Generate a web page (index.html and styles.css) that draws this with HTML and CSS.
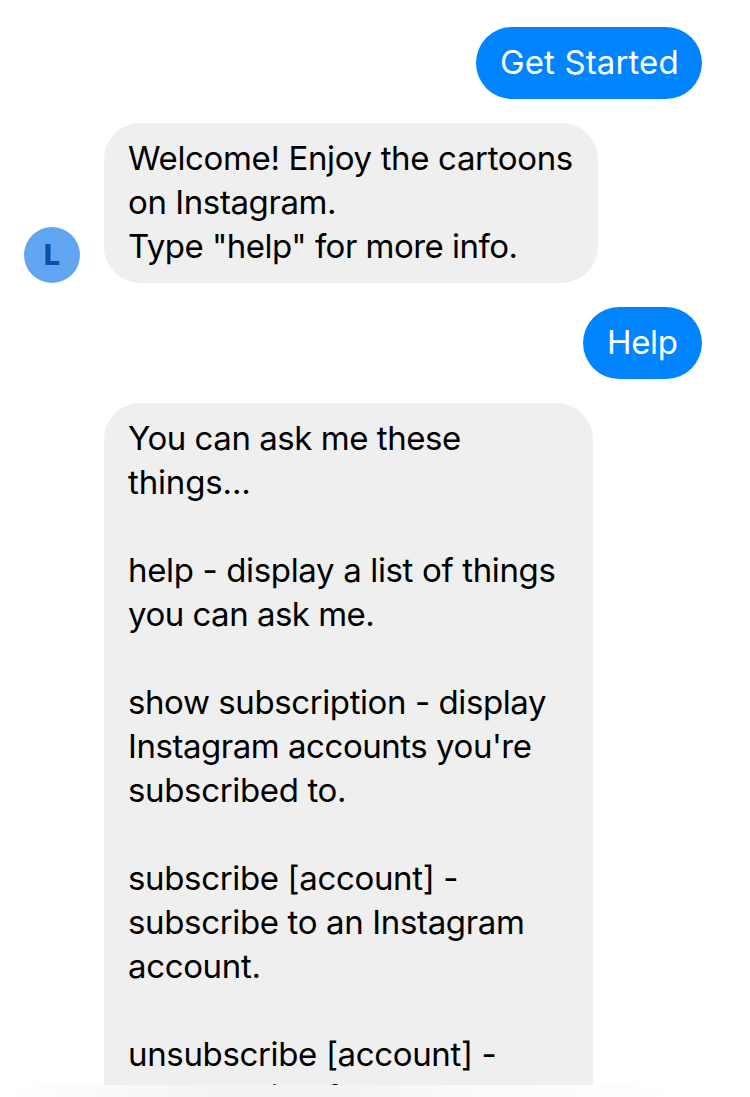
FILE: index.html
```html
<!DOCTYPE html>
<html lang="en">
<head>
<meta charset="utf-8">
<title>Chat</title>
<link rel="stylesheet" href="styles.css">
</head>
<body>
<div class="screen">
<main class="chat">
<div class="row sent"><div class="bubble blue start">Get Started</div></div>
<div class="row received">
<div class="avatar">L</div>
<div class="bubble grey welcome">
<div>Welcome! Enjoy the cartoons</div>
<div class="snug">on Instagram.</div>
<div class="tighter">Type "help" for more info.</div>
</div>
</div>
<div class="row sent"><div class="bubble blue help">Help</div></div>
<div class="row received">
<div class="avatar-space"></div>
<div class="bubble grey commands">
<div class="tight">You can ask me these</div>
<div class="loose">things...</div>
<br>
<div>help - display a list of things</div>
<div class="tighter">you can ask me.</div>
<br>
<div class="snug">show subscription - display</div>
<div class="tight">Instagram accounts you're</div>
<div>subscribed to.</div>
<br>
<div>subscribe [account] -</div>
<div>subscribe to an Instagram</div>
<div>account.</div>
<br>
<div>unsubscribe [account] -</div>
<div class="last">unsubscribe from an</div>
</div>
</div>
</main>
<footer class="edge"></footer>
</div>
</body>
</html>
```
FILE: styles.css
```css
* { box-sizing: border-box; }
body { margin: 0; background: #fff; font: 33px/44px Inter, sans-serif; color: #000; }
.screen { height: 1097px; display: flex; flex-direction: column; overflow: hidden; }
.chat { height: 1085px; flex: none; overflow: hidden; display: flex; flex-direction: column; gap: 24px; padding: 27px 48px 0 24px; }
.row { display: flex; flex: none; gap: 24px; }
.sent { justify-content: flex-end; }
.received { align-items: flex-end; }
.bubble { border-radius: 36px; padding: 13px 24px 15px; white-space: nowrap; letter-spacing: -.35px; }
.snug { letter-spacing: -.41px; }
.tight { letter-spacing: -.46px; }
.tighter { letter-spacing: -.51px; }
.loose { letter-spacing: -.15px; }
.last { margin-top: -1px; }
.blue { background: #0084ff; color: #fff; height: 72px; font-weight: 380; }
.start { width: 226px; letter-spacing: .12px; }
.help { width: 119px; }
.grey { background: #efefef; }
.welcome { width: 494px; }
.commands { width: 489px; }
.avatar { width: 56px; height: 56px; border-radius: 50%; background: #60a4f2; color: #0b4fa5; font-size: 29px; font-weight: 800; line-height: 56px; text-align: center; }
.avatar-space { width: 56px; }
.edge { height: 12px; background: linear-gradient(90deg, #fff 0, #fcfcfc 8%, #f2f2f2 32%, #f3f3f3 46%, #fbfbfb 65%, #fdfdfd 84%, #fff 90%); }
```
